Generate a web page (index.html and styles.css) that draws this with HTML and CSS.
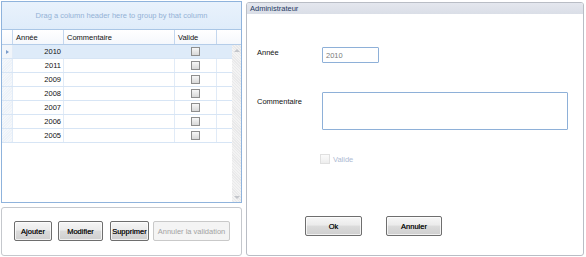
FILE: index.html
```html
<!DOCTYPE html>
<html lang="fr">
<head>
<meta charset="utf-8">
<title>Administrateur</title>
<link rel="stylesheet" href="styles.css">
</head>
<body>
<div class="app">
  <div class="left">
    <div class="grid">
      <div class="group-panel">Drag a column header here to group by that column</div>
      <div class="header-row">
        <div class="cell ind"></div>
        <div class="cell c-annee">Année</div>
        <div class="cell c-comm">Commentaire</div>
        <div class="cell c-valide-h">Valide</div>
        <div class="cell c-fill-h"></div>
      </div>
      <div class="grid-body">
        <div class="rows">
          <div class="row selected"><div class="cell ind"><span class="arrow"></span></div><div class="cell c-annee num">2010</div><div class="cell c-comm"></div><div class="cell c-valide"><span class="chk"></span></div><div class="cell c-fill"></div></div>
          <div class="row"><div class="cell ind"></div><div class="cell c-annee num">2011</div><div class="cell c-comm"></div><div class="cell c-valide"><span class="chk"></span></div><div class="cell c-fill"></div></div>
          <div class="row"><div class="cell ind"></div><div class="cell c-annee num">2009</div><div class="cell c-comm"></div><div class="cell c-valide"><span class="chk"></span></div><div class="cell c-fill"></div></div>
          <div class="row"><div class="cell ind"></div><div class="cell c-annee num">2008</div><div class="cell c-comm"></div><div class="cell c-valide"><span class="chk"></span></div><div class="cell c-fill"></div></div>
          <div class="row"><div class="cell ind"></div><div class="cell c-annee num">2007</div><div class="cell c-comm"></div><div class="cell c-valide"><span class="chk"></span></div><div class="cell c-fill"></div></div>
          <div class="row"><div class="cell ind"></div><div class="cell c-annee num">2006</div><div class="cell c-comm"></div><div class="cell c-valide"><span class="chk"></span></div><div class="cell c-fill"></div></div>
          <div class="row"><div class="cell ind"></div><div class="cell c-annee num">2005</div><div class="cell c-comm"></div><div class="cell c-valide"><span class="chk"></span></div><div class="cell c-fill"></div></div>
        </div>
        <div class="scrollbar">
          <span class="sb-up"></span>
          <span class="sb-down"></span>
        </div>
      </div>
    </div>
    <div class="btn-panel">
      <button class="btn b-ajouter">Ajouter</button>
      <button class="btn b-modifier">Modifier</button>
      <button class="btn b-supprimer">Supprimer</button>
      <button class="btn b-annuler-val" disabled>Annuler la validation</button>
    </div>
  </div>

  <div class="admin">
    <div class="admin-head">Administrateur</div>
    <div class="admin-body">
      <div class="form-row r-annee">
        <label class="lbl l-annee">Année</label>
        <div class="input">2010</div>
      </div>
      <div class="form-row r-comm">
        <label class="lbl l-comm">Commentaire</label>
        <div class="textarea"></div>
      </div>
      <div class="check-row">
        <span class="chk disabled"></span>
        <span class="check-lbl">Valide</span>
      </div>
      <div class="admin-btns">
        <button class="btn b-ok">Ok</button>
        <button class="btn b-annuler">Annuler</button>
      </div>
    </div>
  </div>
</div>
</body>
</html>
```

FILE: styles.css
```css
* { box-sizing: border-box; }
html, body { margin: 0; padding: 0; background: #ffffff; }
body {
  font-family: "Liberation Sans", Arial, sans-serif;
  font-size: 7.5px;
  color: #111;
  width: 586px;
  height: 257px;
  overflow: hidden;
}
.app {
  display: flex;
  padding: 1px 0 0 1px;
  gap: 4px;
}
.left {
  width: 241px;
  display: flex;
  flex-direction: column;
  gap: 4px;
}

/* grid */
.grid {
  height: 202px;
  border: 1px solid #8fb3dc;
  display: flex;
  flex-direction: column;
  background: #fff;
}
.group-panel {
  height: 28px;
  border-bottom: 1px solid #a9c6e6;
  background: linear-gradient(#e9f2fc, #dfecfa);
  color: #94b2d6;
  display: flex;
  align-items: center;
  justify-content: center;
  padding-bottom: 1px;
}
.header-row {
  display: flex;
  height: 15px;
  border-bottom: 1px solid #b5cde9;
  background: linear-gradient(#ffffff, #f5f8fc);
}
.header-row .cell {
  border-right: 1px solid #c4d7ee;
  display: flex;
  align-items: center;
  padding-left: 3px;
  color: #111;
}
.cell.ind { width: 11px; flex: none; padding: 0; }
.c-annee { width: 51px; flex: none; }
.c-comm { width: 111px; flex: none; }
.c-valide, .c-valide-h { width: 42px; flex: none; }
.c-fill-h { flex: 1; border-right: none !important; }
.c-fill { width: 15px; flex: none; }

.grid-body {
  flex: 1;
  display: flex;
}
.rows {
  flex: 1;
  display: flex;
  flex-direction: column;
}
.row {
  display: flex;
  height: 14px;
  border-bottom: 1px solid #d7e5f5;
}
.row .cell {
  border-right: 1px solid #e1ebf7;
  display: flex;
  align-items: center;
}
.row .cell.c-fill { border-right: none; }
.row .cell.ind {
  background: repeating-linear-gradient(135deg, #f4f7fb 0 1px, #edf2f8 1px 2px);
  justify-content: center;
}
.row.selected { background: #deebf9; }
.row.selected .cell.ind { background: #f1f5fa; }
.arrow {
  width: 0; height: 0;
  border-left: 3px solid #7a9ccb;
  border-top: 2.5px solid transparent;
  border-bottom: 2.5px solid transparent;
}
.num { justify-content: flex-end; padding-right: 2px; color: #111; }
.c-valide { justify-content: center; }
.chk {
  display: inline-block;
  width: 9px;
  height: 9px;
  border: 1px solid #8e8e8e;
  background: linear-gradient(#f7f7f7, #d8d8d8);
  flex: none;
}
.scrollbar {
  width: 9px;
  background: repeating-linear-gradient(45deg, #f3f3f3 0 1px, #e9e9ea 1px 2px);
  display: flex;
  flex-direction: column;
  justify-content: space-between;
  align-items: center;
  padding: 4px 0 3px;
}
.sb-up {
  width: 0; height: 0;
  border-bottom: 3px solid #c3c6cb;
  border-left: 3px solid transparent;
  border-right: 3px solid transparent;
}
.sb-down {
  width: 0; height: 0;
  border-top: 3px solid #c3c6cb;
  border-left: 3px solid transparent;
  border-right: 3px solid transparent;
}

/* buttons */
.btn-panel {
  height: 49px;
  border: 1px solid #c5c8cd;
  border-radius: 3px;
  display: flex;
  align-items: flex-start;
  padding: 13px 0 0 12px;
}
.btn {
  font-family: inherit;
  font-size: 7.5px;
  height: 20px;
  border: 1px solid #6e6e6e;
  border-radius: 2px;
  background: linear-gradient(#f6f6f6 0%, #ebebeb 45%, #dbdbdb 50%, #cfcfcf 100%);
  color: #111;
  padding: 0;
  box-shadow: inset 0 0 0 1px rgba(255,255,255,0.7);
  text-shadow: 0 0 0.4px #333;
}
.b-ajouter { width: 38px; }
.b-modifier { width: 45px; margin-left: 6px; }
.b-supprimer { width: 39px; margin-left: 7px; }
.b-annuler-val {
  width: 77px; margin-left: 4px;
  border-color: #c9c9c9;
  background: #f4f4f4;
  color: #a3a3a3;
  box-shadow: none;
  text-shadow: none;
}

/* right panel */
.admin {
  width: 338px;
  height: 254px;
  margin-top: 1px;
  border: 1px solid #b9bdc5;
  border-radius: 3px;
  display: flex;
  flex-direction: column;
}
.admin-head {
  height: 11px;
  background: linear-gradient(#e4e7ee, #dadee7);
  color: #1f3a63;
  padding-left: 3px;
  display: flex;
  align-items: center;
  border-radius: 2px 2px 0 0;
}
.admin-body {
  display: flex;
  flex-direction: column;
  padding-left: 10px;
}
.form-row {
  display: flex;
  align-items: flex-start;
}
.lbl {
  width: 65px;
  flex: none;
  line-height: 10px;
  color: #111;
}
.r-annee { margin-top: 33px; }
.l-annee { padding-top: 1px; }
.r-comm { margin-top: 29px; }
.l-comm { padding-top: 5px; }
.input {
  width: 57px;
  height: 16px;
  border: 1px solid #8eb0d8;
  color: #7b7b7b;
  padding-left: 3px;
  display: flex;
  align-items: center;
  border-radius: 1px;
}
.textarea {
  width: 246px;
  height: 38px;
  border: 1px solid #8eb0d8;
  border-radius: 1px;
}
.check-row {
  margin-top: 24px;
  margin-left: 63px;
  display: flex;
  align-items: center;
  gap: 3px;
}
.chk.disabled {
  width: 10px; height: 10px;
  border-color: #e0e0e0;
  background: linear-gradient(#fbfbfb, #eeeeee);
}
.check-lbl { color: #aebbd3; }
.admin-btns {
  margin-top: 52px;
  margin-left: 48px;
  display: flex;
  gap: 24px;
}
.b-ok { width: 57px; }
.b-annuler { width: 56px; }
```
